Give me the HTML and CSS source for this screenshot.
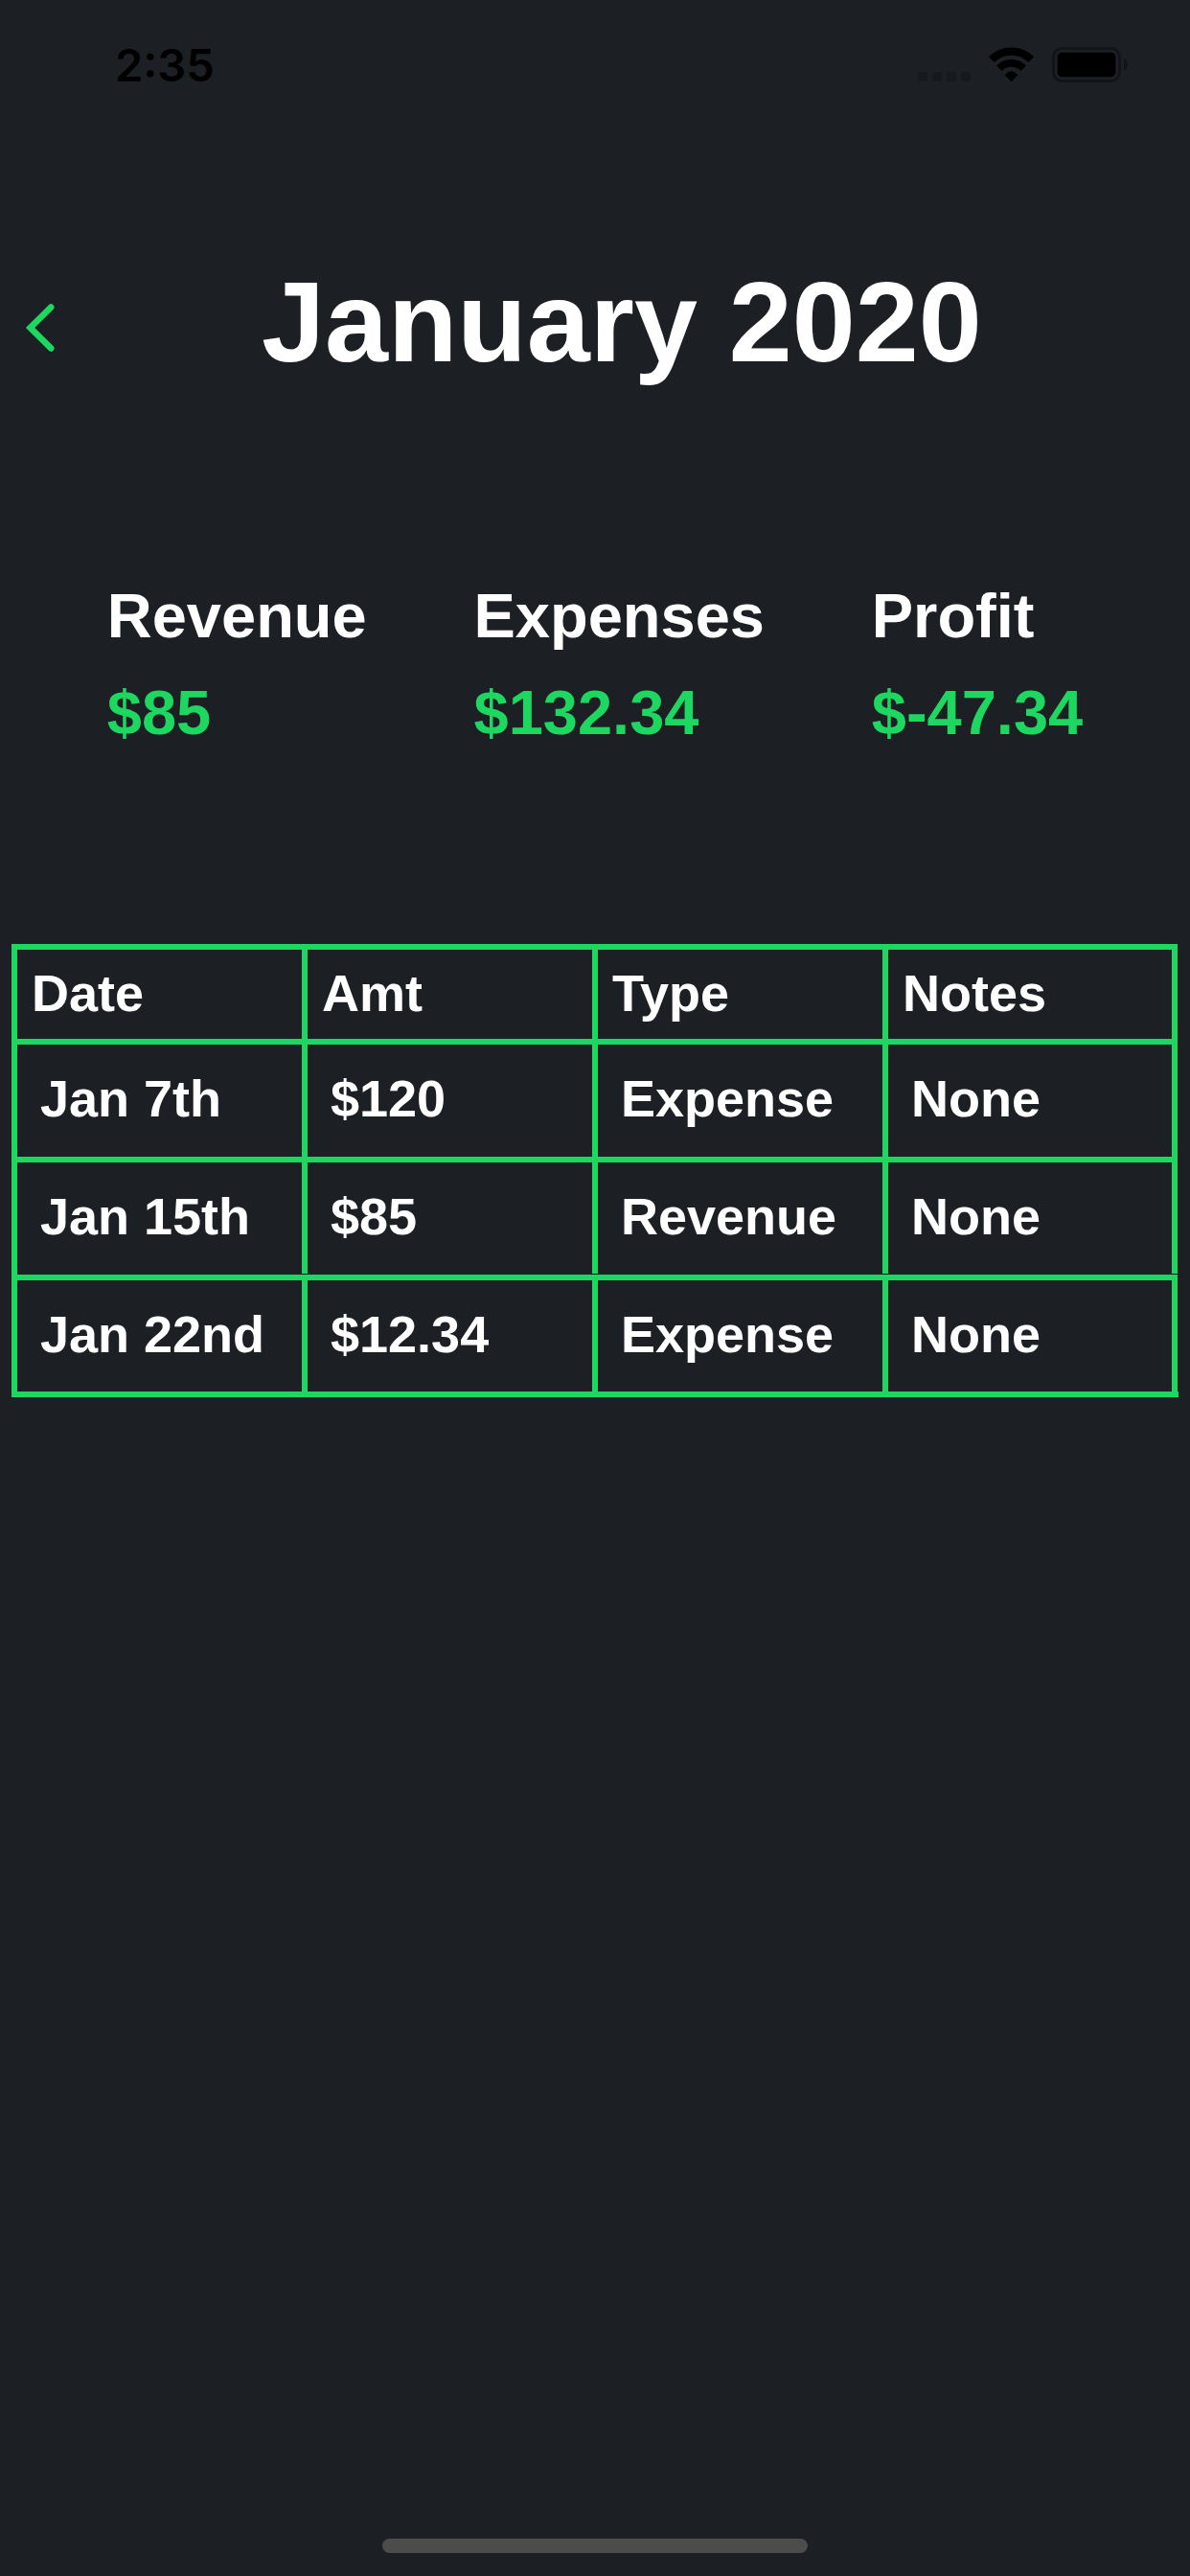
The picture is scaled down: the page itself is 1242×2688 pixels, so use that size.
FILE: index.html
```html
<!DOCTYPE html>
<html lang="en">
<head>
<meta charset="utf-8">
<title>January 2020</title>
<link rel="stylesheet" href="styles.css">
</head>
<body>
<div class="screen">
  <div class="status-bar">
    <span class="time">2:35</span>
    <svg class="status-icons" viewBox="51 51 663 120" aria-hidden="true">
      <g fill="#17191d">
        <rect x="54" y="135" width="30" height="30" rx="10"/>
        <rect x="99" y="135" width="30" height="30" rx="10"/>
        <rect x="144" y="135" width="30" height="30" rx="10"/>
        <rect x="189" y="135" width="30" height="30" rx="10"/>
      </g>
      <g fill="none" stroke="#000" stroke-width="24.5">
        <path d="M284.500 96.500A88 88 0 0 1 408.500 96.500"/>
        <path d="M308.500 123.500A54 54 0 0 1 384.500 123.500" stroke-width="23"/>
      </g>
      <path d="M327 144Q346.500 122 366 144Q367 145 366 146L348.500 164Q346.500 166 344.500 164L327 146Q326 145 327 144Z"/>
      <rect x="478.500" y="61.500" width="207" height="102" rx="27" fill="none" stroke="#121417" stroke-width="9"/>
      <rect x="491" y="74" width="182" height="77" rx="14"/>
      <path d="M699 92Q711 98 711 112Q711 126 699 132Z" fill="#121417"/>
    </svg>
  </div>
  <header class="header">
    <svg class="back" viewBox="0 0 36 56" role="img" aria-label="Back">
      <path d="M30.200 6.600L8.600 28L30.200 49.400"/>
    </svg>
    <h1 class="title">January 2020</h1>
  </header>
  <section class="summary">
    <div class="stat"><span>Revenue</span><span class="value">$85</span></div>
    <div class="stat"><span>Expenses</span><span class="value">$132.34</span></div>
    <div class="stat"><span>Profit</span><span class="value">$-47.34</span></div>
  </section>
  <section class="table">
    <div class="row head"><div>Date</div><div>Amt</div><div>Type</div><div>Notes</div></div>
    <div class="row"><div>Jan 7th</div><div>$120</div><div>Expense</div><div>None</div></div>
    <div class="row split"><div>Jan 15th</div><div>$85</div><div>Revenue</div><div>None</div></div>
    <div class="row"><div>Jan 22nd</div><div>$12.34</div><div>Expense</div><div>None</div></div>
  </section>
  <div class="home-indicator"></div>
</div>
</body>
</html>
```
FILE: styles.css
```css
* { box-sizing: border-box; }

body {
  margin: 0;
  background: #1c1f24;
  color: #fff;
  font-family: "Liberation Sans", Arial, sans-serif;
  font-weight: 700;
}

.screen {
  display: flex;
  flex-direction: column;
  width: 1242px;
  height: 2688px;
  padding-bottom: 24px;
}

.status-bar {
  display: flex;
  justify-content: space-between;
  align-items: flex-start;
  height: 132px;
  padding: 47px 64px 0 120px;
  color: #000;
}

.time {
  font: 600 47px/42px Inter, sans-serif;
}

.status-icons {
  width: 221px;
  height: 40px;
}

.header {
  display: flex;
  align-items: center;
  height: 138px;
  margin-top: 135px;
}

.back {
  width: 36px;
  height: 56px;
  margin: 12px 0 0 23px;
  fill: none;
  stroke: #1ed760;
  stroke-width: 6.6;
  stroke-linecap: round;
  stroke-linejoin: miter;
}

.title {
  flex: 1;
  margin: 0 0 0 -7px;
  padding-left: 221px;
  font-size: 118.6px;
  line-height: 138px;
  white-space: nowrap;
}

.summary {
  display: flex;
  justify-content: space-evenly;
  margin-top: 200px;
  font-size: 65px;
  line-height: 76px;
}

.stat {
  display: flex;
  flex-direction: column;
  gap: 25px;
}

.value { color: #1ed760; }

.table {
  width: 1218px;
  margin: 203px 12px 0;
  border-bottom: 6px solid #1ed760;
  font-size: 54px;
  line-height: 62px;
}

.row {
  display: grid;
  grid-template-columns: 303px 303px 303px 308px;
  height: 123px;
}

.row > div {
  padding: 25px 0 0 24px;
  border: solid #1ed760;
  border-width: 6px 0 0 6px;
  white-space: nowrap;
}

.row > div:last-child { border-right-width: 6px; }

.row:last-child { height: 122px; }

.head { height: 99px; }

.head > div { padding: 14px 0 0 15px; }

.split > div:not(:first-child) { margin-bottom: 1px; }

.home-indicator {
  width: 444px;
  height: 15px;
  margin: auto auto 0;
  border-radius: 8px;
  background: #4c4c4c;
}
```
